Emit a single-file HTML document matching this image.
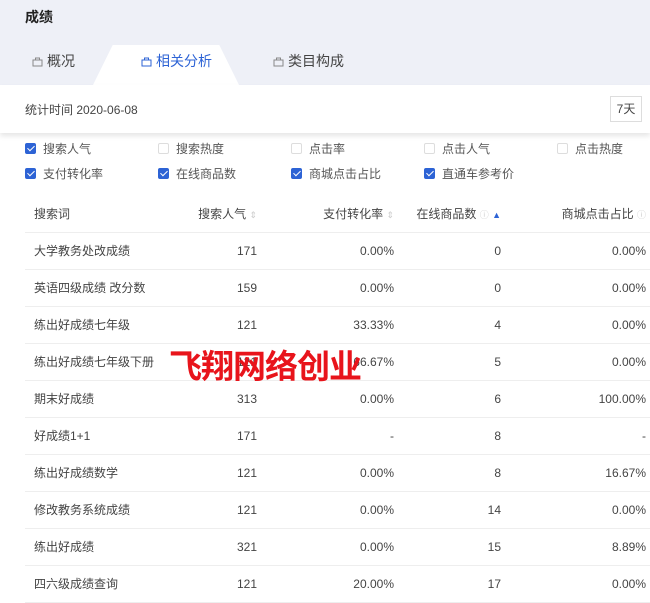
<!DOCTYPE html>
<html><head><meta charset="utf-8"><style>
*{margin:0;padding:0;box-sizing:border-box}
body{width:650px;height:601px;overflow:hidden;background:#fff;font-family:"Liberation Sans","Noto Sans CJK SC",sans-serif;color:#333;position:relative}
.top{position:absolute;left:0;top:0;width:650px;height:86px;background:#eef0f7}
.title{position:absolute;left:25px;top:7px;font-size:14px;font-weight:bold;color:#222}
.tab{position:absolute;top:51px;font-size:14px;color:#444}
.tab svg{vertical-align:-1px;margin-right:4px}
.act{position:absolute;left:92px;top:45px;width:148px;height:42px;background:#fff;clip-path:polygon(14% 0,86% 0,100% 100%,0 100%)}
.panel{position:absolute;left:0;top:85px;width:650px;height:48px;background:#fff;box-shadow:0 3px 5px rgba(0,0,0,.1)}
.stat{position:absolute;left:25px;top:101px;font-size:12px;color:#444}
.btn{position:absolute;left:610px;top:96px;width:32px;height:26px;border:1px solid #ddd;font-size:12px;text-align:center;line-height:24px;color:#444}
.cb{position:absolute;font-size:12px;color:#555}
.cb i{display:inline-block;width:11px;height:11px;border:1px solid #ddd;border-radius:2px;vertical-align:-1px;margin-right:7px;position:relative}
.cb i.on{background:#2d63d5;border-color:#2d63d5}
.cb i.on:after{content:"";position:absolute;left:3px;top:0px;width:3px;height:6px;border:solid #fff;border-width:0 1.5px 1.5px 0;transform:rotate(45deg)}
table{position:absolute;left:25px;top:195px;width:625px;border-collapse:collapse;font-size:12px}
td{height:37px;border-bottom:1px solid #eee;color:#444}
td.k{padding-left:9px;width:155px}
td.a{text-align:right;width:77px}
td.b{text-align:right;width:137px}
td.c{text-align:right;width:110px;padding-right:3px}
td.d{text-align:right;padding-right:4px}
.wm{position:absolute;left:169px;top:340px;font-size:33px;font-weight:bold;color:#e8141b;letter-spacing:-1px;font-family:"Noto Sans CJK SC",sans-serif}
.s{color:#ccc;font-size:9px}
</style></head><body>
<div class="top"></div>
<div class="title">成绩</div>
<div class="act"></div>
<div class="tab" style="left:32px"><svg width="11" height="11" viewBox="0 0 11 11"><path d="M1 4h9v6H1z M3.5 4V2h4v2" fill="none" stroke="#888"/></svg>概况</div>
<div class="tab" style="left:141px;color:#2d63d5"><svg width="11" height="11" viewBox="0 0 11 11"><path d="M1 4h9v6H1z M3.5 4V2h4v2" fill="none" stroke="#2d63d5"/></svg>相关分析</div>
<div class="tab" style="left:273px"><svg width="11" height="11" viewBox="0 0 11 11"><path d="M1 4h9v6H1z M3.5 4V2h4v2" fill="none" stroke="#888"/></svg>类目构成</div>
<div class="panel"></div>
<div class="stat">统计时间 2020-06-08</div>
<div class="btn">7天</div>
<div class="cb" style="left:25px;top:140px"><i class="on"></i>搜索人气</div>
<div class="cb" style="left:158px;top:140px"><i></i>搜索热度</div>
<div class="cb" style="left:291px;top:140px"><i></i>点击率</div>
<div class="cb" style="left:424px;top:140px"><i></i>点击人气</div>
<div class="cb" style="left:557px;top:140px"><i></i>点击热度</div>
<div class="cb" style="left:25px;top:165px"><i class="on"></i>支付转化率</div>
<div class="cb" style="left:158px;top:165px"><i class="on"></i>在线商品数</div>
<div class="cb" style="left:291px;top:165px"><i class="on"></i>商城点击占比</div>
<div class="cb" style="left:424px;top:165px"><i class="on"></i>直通车参考价</div>
<table>
<tr><td class="k">搜索词</td><td class="a">搜索人气 <span class="s">⇕</span></td><td class="b">支付转化率 <span class="s">⇕</span></td><td class="c">在线商品数 <span class="s">ⓘ</span> <span style="color:#2d63d5;font-size:9px">▲</span></td><td class="d">商城点击占比 <span class="s">ⓘ</span></td></tr>
<tr><td class="k">大学教务处改成绩</td><td class="a">171</td><td class="b">0.00%</td><td class="c">0</td><td class="d">0.00%</td></tr>
<tr><td class="k">英语四级成绩 改分数</td><td class="a">159</td><td class="b">0.00%</td><td class="c">0</td><td class="d">0.00%</td></tr>
<tr><td class="k">练出好成绩七年级</td><td class="a">121</td><td class="b">33.33%</td><td class="c">4</td><td class="d">0.00%</td></tr>
<tr><td class="k">练出好成绩七年级下册</td><td class="a">121</td><td class="b">66.67%</td><td class="c">5</td><td class="d">0.00%</td></tr>
<tr><td class="k">期末好成绩</td><td class="a">313</td><td class="b">0.00%</td><td class="c">6</td><td class="d">100.00%</td></tr>
<tr><td class="k">好成绩1+1</td><td class="a">171</td><td class="b">-</td><td class="c">8</td><td class="d">-</td></tr>
<tr><td class="k">练出好成绩数学</td><td class="a">121</td><td class="b">0.00%</td><td class="c">8</td><td class="d">16.67%</td></tr>
<tr><td class="k">修改教务系统成绩</td><td class="a">121</td><td class="b">0.00%</td><td class="c">14</td><td class="d">0.00%</td></tr>
<tr><td class="k">练出好成绩</td><td class="a">321</td><td class="b">0.00%</td><td class="c">15</td><td class="d">8.89%</td></tr>
<tr><td class="k">四六级成绩查询</td><td class="a">121</td><td class="b">20.00%</td><td class="c">17</td><td class="d">0.00%</td></tr>
</table>
<div class="wm">飞翔网络创业</div>
</body></html>
